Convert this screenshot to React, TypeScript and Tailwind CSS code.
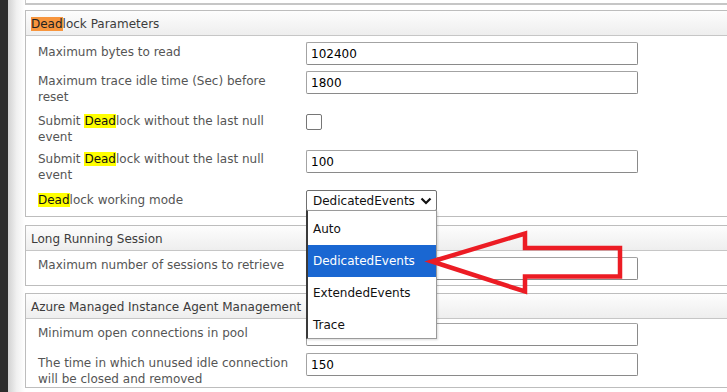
const Dead = ({ orange = false }) => (
  <span className={orange ? "bg-[#f7953d] text-[#222]" : "bg-[#ffff00] text-[#111]"}>Dead</span>
);

const Field = ({ value = "", className = "" }) => (
  <div
    className={`flex h-[23px] w-[332px] shrink-0 items-center rounded-[2px] border border-[#a3a3a3] border-r-[#8a8a8a] border-b-[#8a8a8a] bg-white px-[4px] text-[12px] text-black ${className}`}
  >
    {value}
  </div>
);

const Row = ({ label, children, className = "", labelPad = "pt-[2px]" }) => (
  <div className={`flex items-start ${className}`}>
    <div className={`mr-[12px] w-[256px] shrink-0 text-[12px] leading-4 text-[#555] ${labelPad}`}>{label}</div>
    {children}
  </div>
);

const Panel = ({ title, children, className = "" }) => (
  <div className={`shrink-0 border-y border-l border-[#bdbdbd] ${className}`}>
    <div className="h-[25px] border-b border-[#c6c6c6] bg-gradient-to-b from-[#fdfdfd] to-[#eeeeee] pl-[5px] pt-[5px] text-[12px] leading-4 text-[#3c3c3c]">
      {title}
    </div>
    {children}
  </div>
);

export default function App() {
  const options = ["Auto", "DedicatedEvents", "ExtendedEvents", "Trace"];

  return (
    <div className="relative flex h-[392px] w-[727px] overflow-hidden bg-white font-['DejaVu_Sans',sans-serif]">
      <div className="w-[8px] shrink-0 bg-[#2c2c2c]" />
      <div className="w-[17px] shrink-0 bg-gradient-to-r from-[#d2d2d2] via-[#f0f0f0] to-white" />

      <div className="flex min-w-0 flex-1 flex-col">
        <div className="h-[5px] shrink-0 border-b-2 border-l border-[#c6c6c6]" />

        <Panel className="mt-[5px]" title={<span><Dead orange />lock Parameters</span>}>
          <div className="pb-[5px] pl-[12px] pt-[6px]">
            <Row label="Maximum bytes to read">
              <Field value="102400" />
            </Row>
            <Row className="mt-[6px]" label="Maximum trace idle time (Sec) before reset">
              <Field value="1800" />
            </Row>
            <Row className="mt-[6px]" label={<>Submit <Dead />lock without the last null event</>}>
              <div className="mt-[3px] h-[16px] w-[16px] rounded-[2px] border border-[#767676] bg-white" />
            </Row>
            <Row className="mt-[4px]" label={<>Submit <Dead />lock without the last null event</>}>
              <Field value="100" className="mt-[1px]" />
            </Row>
            <Row className="mt-[7px]" label={<><Dead />lock working mode</>}>
              <div className="flex h-[21px] w-[131px] items-center justify-between rounded-[2px] border border-[#707070] bg-white pl-[6px] pr-[4px] text-[12px] text-[#111]">
                <span>DedicatedEvents</span>
                <svg width="12" height="8" viewBox="0 0 12 8">
                  <polyline points="1.5,1.5 6,6 10.5,1.5" fill="none" stroke="#111" strokeWidth="2.2" />
                </svg>
              </div>
            </Row>
          </div>
        </Panel>

        <Panel className="mt-[8px]" title="Long Running Session">
          <div className="pb-[5px] pl-[12px] pt-[6px]">
            <Row label="Maximum number of sessions to retrieve" labelPad="pt-0">
              <Field />
            </Row>
          </div>
        </Panel>

        <Panel className="mt-[7px]" title="Azure Managed Instance Agent Management">
          <div className="pl-[12px] pt-[4px]">
            <Row label="Minimum open connections in pool" labelPad="pt-[2px]">
              <Field value="0" />
            </Row>
            <Row className="mt-[7px]" label="The time in which unused idle connection will be closed and removed">
              <Field value="150" />
            </Row>
          </div>
        </Panel>
      </div>

      {/* open select list */}
      <div className="absolute left-[306px] top-[210px] flex h-[129px] w-[131px] flex-col overflow-hidden border border-l-2 border-[#9a9a9a] border-l-[#3a3a3a] bg-white pt-[2px] text-[12px] text-[#111] shadow-[1px_1px_2px_rgba(0,0,0,0.15)]">
        {options.map((o) => (
          <div
            key={o}
            className={`flex h-8 shrink-0 items-center pl-[5px] ${o === "DedicatedEvents" ? "bg-[#1a67d2] text-white" : ""}`}
          >
            {o}
          </div>
        ))}
      </div>

      {/* annotation arrow */}
      <svg className="pointer-events-none absolute left-0 top-0" width="727" height="392" viewBox="0 0 727 392">
        <polygon
          points="432,261.5 525,233.5 525,248 620,248 620,276.5 525,276.5 525,291.5"
          fill="none"
          stroke="#ec1c24"
          strokeWidth="4.5"
          strokeLinejoin="miter"
        />
      </svg>
    </div>
  );
}
